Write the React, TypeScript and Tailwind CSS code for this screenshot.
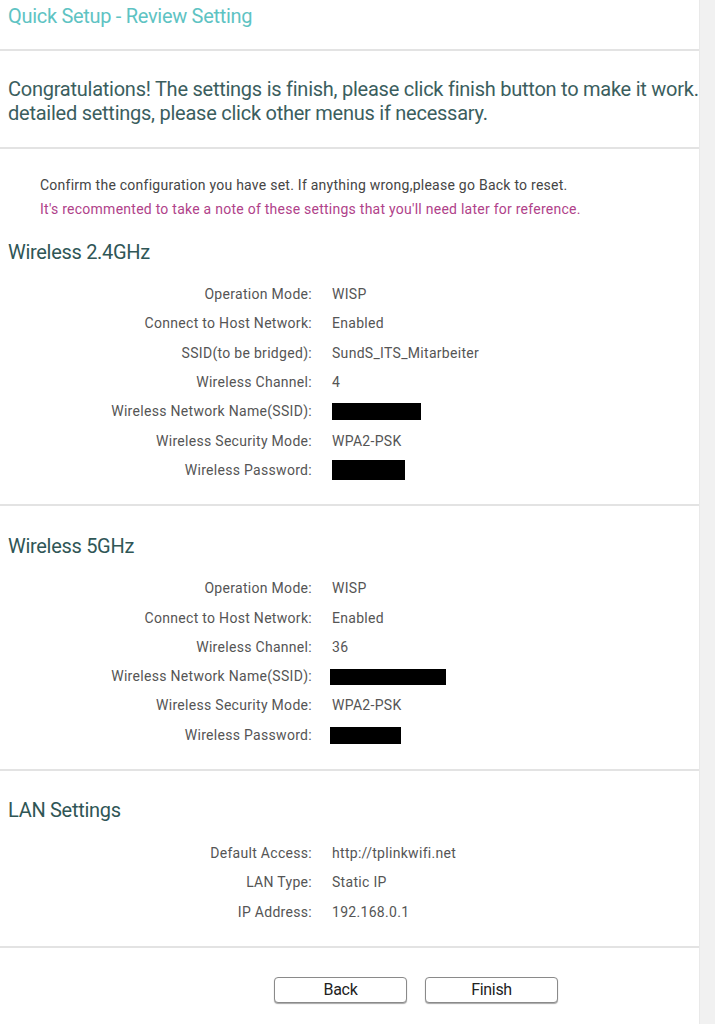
import React from 'react';

type Row = { label: string; value?: string; redact?: { w: number; h: number; dx?: number } };

const wireless24: Row[] = [
  { label: 'Operation Mode:', value: 'WISP' },
  { label: 'Connect to Host Network:', value: 'Enabled' },
  { label: 'SSID(to be bridged):', value: 'SundS_ITS_Mitarbeiter' },
  { label: 'Wireless Channel:', value: '4' },
  { label: 'Wireless Network Name(SSID):', redact: { w: 89, h: 17 } },
  { label: 'Wireless Security Mode:', value: 'WPA2-PSK' },
  { label: 'Wireless Password:', redact: { w: 73, h: 20 } },
];

const wireless5: Row[] = [
  { label: 'Operation Mode:', value: 'WISP' },
  { label: 'Connect to Host Network:', value: 'Enabled' },
  { label: 'Wireless Channel:', value: '36' },
  { label: 'Wireless Network Name(SSID):', redact: { w: 116, h: 16, dx: -2 } },
  { label: 'Wireless Security Mode:', value: 'WPA2-PSK' },
  { label: 'Wireless Password:', redact: { w: 71, h: 17, dx: -2 } },
];

const lan: Row[] = [
  { label: 'Default Access:', value: 'http://tplinkwifi.net' },
  { label: 'LAN Type:', value: 'Static IP' },
  { label: 'IP Address:', value: '192.168.0.1' },
];

const Divider = () => <div className="h-[2px] bg-[#e3e3e3]" />;

const InfoRows: React.FC<{ rows: Row[] }> = ({ rows }) => (
  <div className="flex flex-col">
    {rows.map((r) => (
      <div key={r.label} className="flex items-center h-[29.3px] text-[14px] text-[#555] tracking-[0.3px]">
        <span className="w-[312px] text-right shrink-0">{r.label}</span>
        <span className="ml-[20px] flex items-center">
          {r.redact ? (
            <span
              className="block bg-black"
              style={{ width: r.redact.w, height: r.redact.h, marginLeft: r.redact.dx ?? 0 }}
            />
          ) : (
            r.value
          )}
        </span>
      </div>
    ))}
  </div>
);

const Section: React.FC<{ title: string; rows: Row[]; pt: string; gap: string }> = ({ title, rows, pt, gap }) => (
  <div className={`${pt} pb-[19px]`}>
    <h2 className="pl-2 text-[20px] leading-[28px] text-[#2f5656] tracking-[-0.3px]">{title}</h2>
    <div className={gap}>
      <InfoRows rows={rows} />
    </div>
  </div>
);

export default function App() {
  return (
    <div className="flex w-[715px] h-[1024px] overflow-hidden bg-white" style={{ fontFamily: 'Roboto, "Liberation Sans", sans-serif' }}>
      <div className="w-[699px] shrink-0 overflow-hidden">
        {/* 헤더 */}
        <div className="h-[49px] pl-2 pt-[2px]">
          <h1 className="text-[20px] leading-[28px] text-[#5ec3c3] tracking-[-0.3px]">Quick Setup - Review Setting</h1>
        </div>
        <Divider />

        <div className="h-[96px] pl-2 pt-[26px] text-[20px] leading-[24px] text-[#3b5e5e] tracking-[-0.25px] whitespace-nowrap">
          <p>Congratulations! The settings is finish, please click finish button to make it work.</p>
          <p>detailed settings, please click other menus if necessary.</p>
        </div>
        <Divider />

        <div className="pl-[40px] pt-[24px] text-[14px] leading-[24px] tracking-[0.25px]">
          <p className="text-[#454545]">Confirm the configuration you have set. If anything wrong,please go Back to reset.</p>
          <p className="text-[#b0428a]">It's recommented to take a note of these settings that you'll need later for reference.</p>
        </div>

        <Section title="Wireless 2.4GHz" rows={wireless24} pt="pt-[17px]" gap="mt-[14px]" />
        <Divider />
        <Section title="Wireless 5GHz" rows={wireless5} pt="pt-[26px]" gap="mt-[14px]" />
        <Divider />
        <Section title="LAN Settings" rows={lan} pt="pt-[25px]" gap="mt-[15px]" />
        <Divider />

        {/* 버튼 */}
        <div className="flex gap-[18px] pl-[274px] pt-[29px]">
          <button className="w-[133px] h-[26px] rounded-[4px] border border-[#8a8a8a] bg-white text-[16px] text-[#222] shadow-[0_1px_1px_rgba(0,0,0,0.35)] tracking-[-0.3px]">
            Back
          </button>
          <button className="w-[133px] h-[26px] rounded-[4px] border border-[#8a8a8a] bg-white text-[16px] text-[#222] shadow-[0_1px_1px_rgba(0,0,0,0.35)] tracking-[-0.3px]">
            Finish
          </button>
        </div>
      </div>

      {/* 스크롤바 */}
      <div className="w-[16px] shrink-0 bg-[#f1f1f1] border-l border-[#e9e9e9]" />
    </div>
  );
}
